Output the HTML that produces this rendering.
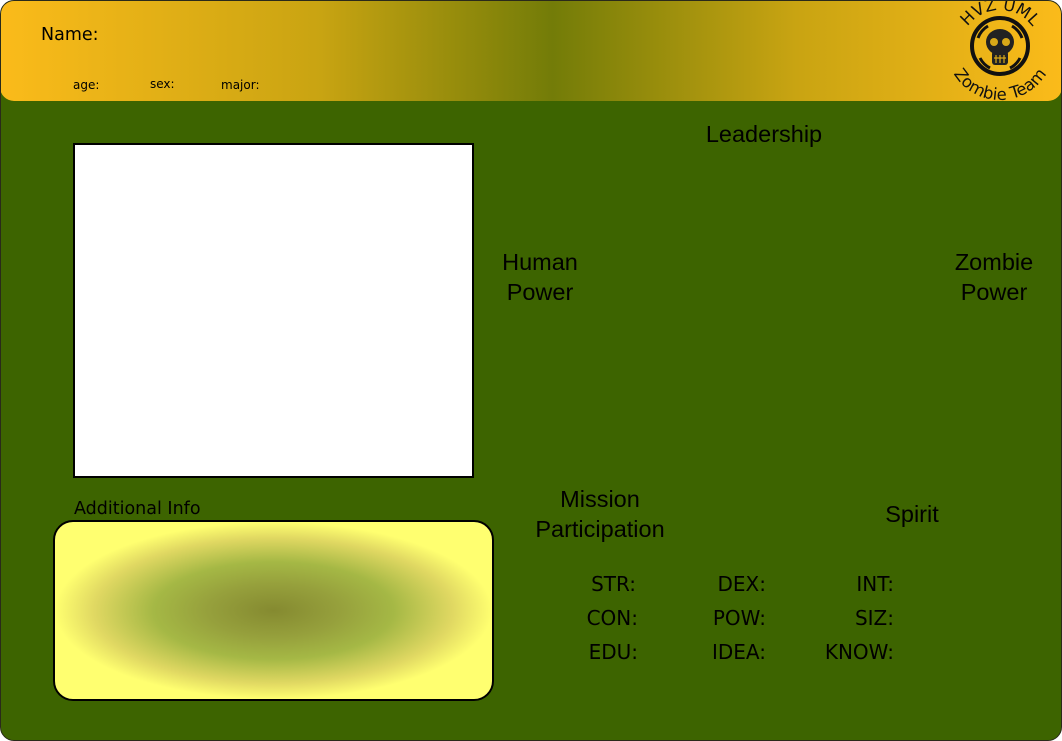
<!DOCTYPE html>
<html><head><meta charset="utf-8"><style>
html,body{margin:0;padding:0;width:1062px;height:741px;overflow:hidden;background:#fff}
.card{position:absolute;left:0;top:0;width:1060px;height:739px;background:#3d6400;border:1px solid #2a2a1a;border-radius:14px;overflow:hidden}
.hdr{position:absolute;left:-1px;top:-1px;width:1062px;height:101px;border-radius:14px;background:linear-gradient(90deg,#fbbb1a 0%,#c9a412 30%,#737c08 52%,#c9a412 75%,#fbbb1a 100%)}
.t{position:absolute;color:#000;white-space:nowrap}
.dv{font-family:"DejaVu Sans",sans-serif}
.ls{font-family:"Liberation Sans",sans-serif;font-size:23.5px;text-align:center;line-height:30px}
.st{font-family:"DejaVu Sans",sans-serif;font-size:20px;text-align:right;width:120px}
.photo{position:absolute;left:72px;top:142px;width:397px;height:331px;background:#fff;border:2px solid #000}
.info{position:absolute;left:52px;top:519px;width:437px;height:177px;border:2px solid #000;border-radius:20px;background:radial-gradient(ellipse 50% 50% at 50% 50%,#858a30 0%,#96a03c 30%,#a5b845 55%,#e0d862 82%,#ffff70 100%)}
</style></head><body>
<div class="card">
<div class="hdr"></div>
<div class="t dv" style="left:40px;top:24px;font-size:17.5px">Name:</div>
<div class="t dv" style="left:72px;top:77px;font-size:12px">age:</div>
<div class="t dv" style="left:149px;top:76px;font-size:12px">sex:</div>
<div class="t dv" style="left:220px;top:77px;font-size:12px">major:</div>
<svg style="position:absolute;left:939px;top:-1px" width="122" height="101" viewBox="0 0 122 101">
<defs><path id="a1" d="M20,50 A40,40 0 0 1 100,50"/><path id="a2" d="M6,46 A54,54 0 0 0 114,46"/></defs>
<text font-family="DejaVu Sans" font-size="16.5" fill="#111" text-anchor="middle"><textPath href="#a1" startOffset="50%">HVZ UML</textPath></text>
<text font-family="DejaVu Sans" font-size="16.5" fill="#111" text-anchor="middle"><textPath href="#a2" startOffset="50%">Zombie Team</textPath></text>
<circle cx="60" cy="46" r="28" fill="none" stroke="#111" stroke-width="4"/>
<path d="M38,38 A23,23 0 0 1 48,26 M82,38 A23,23 0 0 0 72,26 M40,58 A23,23 0 0 0 50,68 M80,58 A23,23 0 0 1 70,68" stroke="#111" stroke-width="3" fill="none"/>
<ellipse cx="60" cy="42" rx="14" ry="13" fill="#222"/>
<rect x="52" y="51" width="16" height="14" rx="3" fill="#222"/>
<circle cx="54" cy="42" r="4" fill="#d8a818"/><circle cx="66" cy="42" r="4" fill="#d8a818"/>
<path d="M54,58 h12 M56,55 v8 M60,55 v8 M64,55 v8" stroke="#d8a818" stroke-width="1.2"/>
</svg>
<div class="photo"></div>
<div class="t dv" style="left:73px;top:498px;font-size:17.5px">Additional Info</div>
<div class="info"></div>
<div class="t ls" style="left:663px;top:118px;width:200px">Leadership</div>
<div class="t ls" style="left:479px;top:246px;width:120px">Human<br>Power</div>
<div class="t ls" style="left:933px;top:246px;width:120px">Zombie<br>Power</div>
<div class="t ls" style="left:499px;top:483px;width:200px">Mission<br>Participation</div>
<div class="t ls" style="left:851px;top:498px;width:120px">Spirit</div>
<div class="t st" style="left:515px;top:571px">STR:</div>
<div class="t st" style="left:645px;top:571px">DEX:</div>
<div class="t st" style="left:773px;top:571px">INT:</div>
<div class="t st" style="left:517px;top:605px">CON:</div>
<div class="t st" style="left:645px;top:605px">POW:</div>
<div class="t st" style="left:773px;top:605px">SIZ:</div>
<div class="t st" style="left:517px;top:639px">EDU:</div>
<div class="t st" style="left:645px;top:639px">IDEA:</div>
<div class="t st" style="left:773px;top:639px">KNOW:</div>
</div>
</body></html>
